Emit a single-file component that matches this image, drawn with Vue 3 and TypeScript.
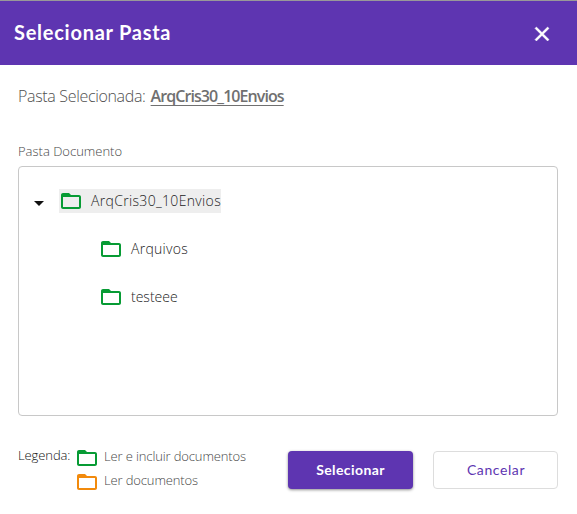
<script setup lang="ts">
import { ref } from 'vue'

interface Folder {
  name: string
  key: string
}

const root = ref('ArqCris30_10Envios')
const children: Folder[] = [
  { name: 'Arquivos', key: 'arquivos' },
  { name: 'testeee', key: 'testeee' },
]
const folderPath =
  'M20 6h-8l-2-2H4c-1.1 0-1.99.9-1.99 2L2 18c0 1.1.9 2 2 2h16c1.1 0 2-.9 2-2V8c0-1.1-.9-2-2-2zm0 12H4V8h16v10z'
</script>

<template>
  <div class="dialog">
    <header class="header">
      <h1 class="title">Selecionar Pasta</h1>
      <button class="close" aria-label="Fechar">
        <svg viewBox="0 0 24 24"><path d="M19 6.41L17.59 5 12 10.59 6.41 5 5 6.41 10.59 12 5 17.59 6.41 19 12 13.41 17.59 19 19 17.59 13.41 12z" /></svg>
      </button>
    </header>
    <main class="content">
      <p class="selected"><span class="selected-label">Pasta Selecionada:</span><span class="selected-name">{{ root }}</span></p>
      <p class="field-label"><span>Pasta Documento</span></p>
      <div class="tree">
        <div class="row">
          <svg class="caret" viewBox="0 0 24 24"><path d="M7 10l5 5 5-5z" /></svg>
          <div class="node active">
            <svg class="folder" viewBox="0 0 24 24"><path :d="folderPath" /></svg>
            <span class="root-name">{{ root }}</span>
          </div>
        </div>
        <div v-for="f in children" :key="f.key" class="row child">
          <div class="node">
            <svg class="folder" viewBox="0 0 24 24"><path :d="folderPath" /></svg>
            <span :class="f.key">{{ f.name }}</span>
          </div>
        </div>
      </div>
      <footer class="footer">
        <span class="legend-title">Legenda:</span>
        <div class="legend">
          <div class="legend-item">
            <svg class="folder" viewBox="0 0 24 24"><path :d="folderPath" /></svg>
            <span class="legend-a">Ler e incluir documentos</span>
          </div>
          <div class="legend-item">
            <svg class="folder orange" viewBox="0 0 24 24"><path :d="folderPath" /></svg>
            <span class="legend-b">Ler documentos</span>
          </div>
        </div>
        <div class="actions">
          <button class="btn primary">Selecionar</button>
          <button class="btn secondary">Cancelar</button>
        </div>
      </footer>
    </main>
  </div>
</template>

<style>
body {
  background: #fff;
}
</style>

<style scoped>
.dialog {
  box-sizing: border-box;
  width: 577px;
  height: 514px;
  overflow: hidden;
  border-top: 1px solid #999;
  background: #fff;
  font-family: Lato, sans-serif;
  white-space: nowrap;
}
button {
  font-family: Lato, sans-serif;
  margin: 0;
  padding: 0;
}
svg {
  display: block;
  flex: none;
  width: 24px;
  height: 24px;
}
.header {
  display: flex;
  align-items: center;
  justify-content: space-between;
  height: 64px;
  box-sizing: border-box;
  padding: 0 23px 0 14px;
  background: #5e35b1;
}
.title {
  margin: 0 0 2px;
  color: #fff;
  font: 700 20px/24px Lato, sans-serif;
  letter-spacing: 0.74px;
}
.close {
  border: 0;
  background: none;
  margin-top: 2px;
}
.close svg {
  fill: #fff;
  stroke: #fff;
  stroke-width: 0.5;
}
.content {
  padding: 19px 19px 0 18px;
}
.selected {
  display: flex;
  gap: 5px;
  margin: 0;
  color: #505050;
  font: 300 16px/24px "Open Sans", sans-serif;
}
.selected-label {
  letter-spacing: -0.33px;
}
.selected-name {
  color: #707070;
  font-weight: 600;
  text-decoration: underline 1px;
  text-underline-offset: 3px;
  text-decoration-skip-ink: none;
  letter-spacing: -0.93px;
}
.field-label {
  margin: 33px 0 5px;
  color: #484848;
  font: 300 13px/20px "Open Sans", sans-serif;
}
.tree {
  box-sizing: border-box;
  height: 250px;
  border: 1px solid #c8c8c8;
  border-radius: 4px;
  padding: 10px 8px;
}
.row {
  display: flex;
  align-items: center;
  height: 48px;
}
.child {
  padding-left: 72px;
}
.caret {
  fill: #111;
  margin: 3px 8px 0 0;
}
.node {
  display: flex;
  align-items: center;
  gap: 8px;
  height: 24px;
  color: #222;
  font: 300 14px/24px "Open Sans", sans-serif;
}
.root-name {
  width: 130px;
  letter-spacing: 0.33px;
}
.arquivos {
  letter-spacing: 0.27px;
}
.active {
  background: #eee;
}
.folder {
  fill: #079b34;
}
.orange {
  fill: #f28a0c;
}
.footer {
  display: flex;
  align-items: flex-start;
  margin-top: 30px;
  font: 300 13px/20px "Open Sans", sans-serif;
}
.legend-title {
  width: 57px;
  margin-top: -1px;
  color: #111;
  letter-spacing: -0.1px;
}
.legend-item {
  display: flex;
  gap: 5px;
  height: 24px;
  color: #484848;
  letter-spacing: -0.13px;
}
.actions {
  display: flex;
  gap: 20px;
  margin: 5px 0 0 auto;
}
.btn {
  box-sizing: border-box;
  width: 125px;
  height: 38px;
  border-radius: 4px;
  font-size: 14px;
  letter-spacing: 0.4px;
}
.primary {
  border: 0;
  padding-bottom: 2px;
  background: #5e35b1;
  color: #fff;
  font-weight: 700;
  box-shadow: 0 1px 3px rgba(0, 0, 0, 0.45);
}
.secondary {
  border: 1px solid #ddd;
  padding: 0 0 2px 1px;
  background: #fff;
  color: #5e35b1;
  letter-spacing: 0.6px;
}
</style>
